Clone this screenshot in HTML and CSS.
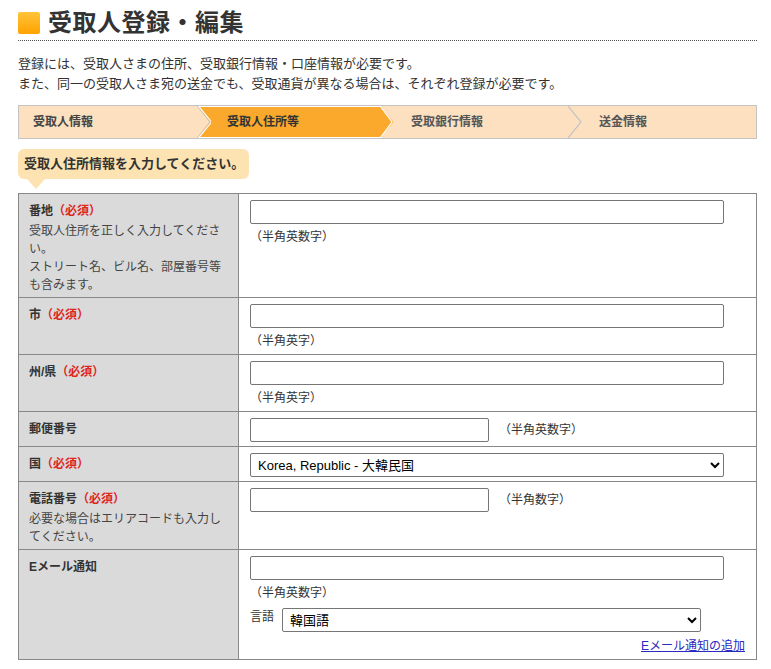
FILE: index.html
```html
<!DOCTYPE html>
<html lang="ja">
<head>
<meta charset="utf-8">
<title>受取人登録・編集</title>
<link rel="stylesheet" href="styles.css">
</head>
<body>
<div class="page">
  <h1 class="title"><span class="title-mark"></span>受取人登録・編集</h1>
  <p class="intro">登録には、受取人さまの住所、受取銀行情報・口座情報が必要です。<br>また、同一の受取人さま宛の送金でも、受取通貨が異なる場合は、それぞれ登録が必要です。</p>

  <div class="steps">
    <div class="step step-1">受取人情報</div>
    <svg class="sep" width="14" height="32" viewBox="0 0 14 32">
      <rect x="0" y="0" width="14" height="32" fill="#fba92d"/>
      <polygon points="0,0 13,16 0,32" fill="#fde0c0"/>
      <polyline points="0,-0.5 13,16 0,32.5" fill="none" stroke="#c8b8a8" stroke-width="1"/>
      <polyline points="1.5,0 14.5,16 1.5,32" fill="none" stroke="#ffffff" stroke-width="1.2"/>
      <line x1="1" y1="0.5" x2="14" y2="0.5" stroke="#ffffff" stroke-width="1"/>
      <line x1="1" y1="31.5" x2="14" y2="31.5" stroke="#ffffff" stroke-width="1"/>
    </svg>
    <div class="step step-2 active">受取人住所等</div>
    <svg class="sep" width="14" height="32" viewBox="0 0 14 32">
      <rect x="0" y="0" width="14" height="32" fill="#fde0c0"/>
      <polygon points="0,0 13.5,16 0,32" fill="#fba92d"/>
      <polyline points="0,0.5 0.5,0.5 12,16 0.5,31.5 0,31.5" fill="none" stroke="#ffffff" stroke-width="1.2"/>
    </svg>
    <div class="step step-3">受取銀行情報</div>
    <svg class="sep" width="14" height="32" viewBox="0 0 14 32">
      <polyline points="0,0 13,16 0,32" fill="none" stroke="#c4c4c4" stroke-width="1.2"/>
    </svg>
    <div class="step step-4">送金情報</div>
  </div>

  <div class="callout">受取人住所情報を入力してください。</div>

  <table class="form">
    <colgroup>
      <col class="col-label">
      <col class="col-field">
    </colgroup>
    <tr>
      <th class="label">
        <div class="label-title">番地<span class="req">（必須）</span></div>
        <div class="label-note">受取人住所を正しく入力してください。</div>
        <div class="label-note">ストリート名、ビル名、部屋番号等も含みます。</div>
      </th>
      <td class="field">
        <input class="text wide" type="text">
        <div class="hint">（半角英数字）</div>
      </td>
    </tr>
    <tr>
      <th class="label"><div class="label-title">市<span class="req">（必須）</span></div></th>
      <td class="field">
        <input class="text wide" type="text">
        <div class="hint">（半角英字）</div>
      </td>
    </tr>
    <tr>
      <th class="label"><div class="label-title">州/県<span class="req">（必須）</span></div></th>
      <td class="field">
        <input class="text wide" type="text">
        <div class="hint">（半角英字）</div>
      </td>
    </tr>
    <tr>
      <th class="label"><div class="label-title">郵便番号</div></th>
      <td class="field">
        <div class="inline">
          <input class="text short" type="text">
          <span class="hint-inline">（半角英数字）</span>
        </div>
      </td>
    </tr>
    <tr>
      <th class="label"><div class="label-title">国<span class="req">（必須）</span></div></th>
      <td class="field">
        <select class="select wide">
          <option>Korea, Republic - 大韓民国</option>
        </select>
      </td>
    </tr>
    <tr>
      <th class="label">
        <div class="label-title">電話番号<span class="req">（必須）</span></div>
        <div class="label-note">必要な場合はエリアコードも入力してください。</div>
      </th>
      <td class="field">
        <div class="inline">
          <input class="text short" type="text">
          <span class="hint-inline">（半角数字）</span>
        </div>
      </td>
    </tr>
    <tr>
      <th class="label"><div class="label-title">Eメール通知</div></th>
      <td class="field">
        <input class="text wide" type="text">
        <div class="hint">（半角英数字）</div>
        <div class="lang-row">
          <span class="lang-label">言語</span>
          <select class="select lang">
            <option>韓国語</option>
          </select>
        </div>
        <div class="add-row"><a class="add-link" href="#">Eメール通知の追加</a></div>
      </td>
    </tr>
  </table>
</div>
</body>
</html>
```

FILE: styles.css
```css
* {
  box-sizing: border-box;
}

html, body {
  margin: 0;
  padding: 0;
  background: #ffffff;
}

body {
  font-family: "Liberation Sans", "Noto Sans CJK JP", sans-serif;
  color: #333333;
  font-size: 13px;
}

.page {
  padding: 0 14px 10px 18px;
}

.title {
  display: flex;
  align-items: center;
  gap: 8px;
  margin: 0;
  padding: 8px 0 2px;
  font-size: 24px;
  line-height: 30px;
  font-weight: bold;
  color: #333333;
  letter-spacing: 0.5px;
  border-bottom: 1px dotted #555555;
}

.title-mark {
  display: block;
  width: 22px;
  height: 22px;
  border-radius: 2px;
  background: linear-gradient(#ffc43a, #ffa200);
}

.intro {
  margin: 13px 0 0;
  font-size: 13px;
  line-height: 20px;
  color: #333333;
}

.steps {
  display: flex;
  margin-top: 11px;
  height: 34px;
  border: 1px solid #c4c4c4;
  background: #fde0c0;
}

.step {
  height: 32px;
  line-height: 32px;
  font-size: 12px;
  font-weight: bold;
  color: #444444;
  white-space: nowrap;
}

.step-1 { width: 178px; padding-left: 14px; }
.step-2 { width: 169px; padding-left: 16px; }
.step-3 { width: 174px; padding-left: 17px; color: #555555; }
.step-4 { flex: 1; padding-left: 17px; color: #555555; }

.step.active {
  background: #fba92d;
  color: #333333;
  box-shadow: inset 0 1px 0 #ffffff, inset 0 -1px 0 #ffffff;
}

.sep {
  display: block;
  flex: none;
}

.callout {
  position: relative;
  width: fit-content;
  margin-top: 10px;
  padding: 0 5px 0 6px;
  height: 30px;
  line-height: 30px;
  font-size: 13px;
  font-weight: bold;
  color: #333333;
  background: #fde3b2;
  border-radius: 6px;
}

.callout::after {
  content: "";
  position: absolute;
  left: 9px;
  bottom: -10px;
  border-left: 9px solid transparent;
  border-right: 9px solid transparent;
  border-top: 10px solid #fde3b2;
}

.form {
  margin-top: 14px;
  width: 739px;
  border-collapse: collapse;
  border: 1px solid #888888;
}

.col-label { width: 220px; }

.form th,
.form td {
  border: 1px solid #888888;
  vertical-align: top;
  text-align: left;
}

.label {
  background: #dadada;
  padding: 8px 10px 3px;
  font-weight: normal;
}

.label-title {
  font-size: 12px;
  line-height: 18px;
  font-weight: bold;
  color: #333333;
  margin-bottom: 2px;
}

.req {
  color: #e0251b;
}

.label-note {
  font-size: 12px;
  line-height: 18px;
  color: #444444;
}

.field {
  padding: 6px 11px 4px;
  background: #ffffff;
}

.text {
  display: block;
  height: 24px;
  border: 1px solid #767676;
  border-radius: 2px;
  background: #ffffff;
  padding: 0 4px;
  font-family: "Liberation Sans", "Noto Sans CJK JP", sans-serif;
  font-size: 13px;
  margin: 0;
}

.wide { width: 474px; }
.short { width: 239px; }

.hint {
  margin-top: 4px;
  font-size: 12px;
  line-height: 18px;
  color: #333333;
}

.inline {
  display: flex;
  align-items: center;
  gap: 10px;
}

.hint-inline {
  font-size: 12px;
  line-height: 18px;
  color: #333333;
}

.select {
  display: block;
  height: 24px;
  margin: 0;
  border: 1px solid #767676;
  border-radius: 2px;
  background: #ffffff;
  color: #000000;
  font-family: "Liberation Sans", "Noto Sans CJK JP", sans-serif;
  font-size: 13px;
  padding: 0 3px;
}

.lang-row {
  display: flex;
  align-items: flex-start;
  gap: 8px;
  margin-top: 6px;
}

.lang-label {
  font-size: 12px;
  line-height: 18px;
  color: #333333;
}

.lang {
  width: 419px;
}

.add-row {
  margin-top: 5px;
  text-align: right;
  font-size: 12px;
  line-height: 18px;
}

.add-link {
  color: #2a2ac0;
  text-decoration: underline;
}
```
